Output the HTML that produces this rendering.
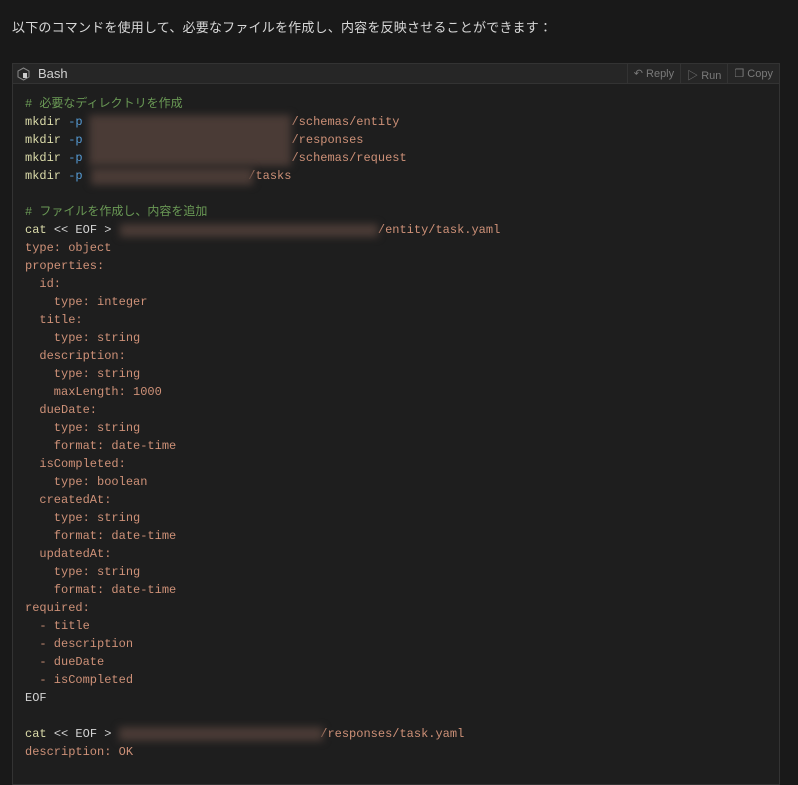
<!DOCTYPE html>
<html><head><meta charset="utf-8"><style>
body{margin:0;background:#191919;width:798px;height:756px;overflow:hidden;position:relative;font-family:"Liberation Sans","Noto Sans CJK JP",sans-serif}
.p{position:absolute;left:12px;top:17px;color:#d8d8d8;font-size:13px;letter-spacing:0.2px}
.box{position:absolute;left:12px;top:63px;width:766px;height:720px;border:1px solid #333;background:#1e1e1e}
.hd{height:19px;background:#262626;border-bottom:1px solid #333;position:relative}
.hd .t{position:absolute;left:25px;top:2px;color:#d0d0d0;font-size:13px}
.btns{position:absolute;right:0;top:0;height:19px;font-size:11px;color:#7a7a7a;display:flex}
.btns span{border-left:1px solid #333;padding:3px 6px 0 6px;height:16px}
pre{position:absolute;left:12px;top:31px;margin:0;font-family:"Liberation Mono","Noto Sans CJK JP",monospace;font-size:12px;line-height:18px;color:#ce9178}
.c{color:#6a9955}.y{color:#dcdcaa}.b{color:#569cd6}.w{color:#d4d4d4}
.bl{position:absolute;background:#4a3b36;filter:blur(4px)}
</style></head><body>
<div class="p">以下のコマンドを使用して、必要なファイルを作成し、内容を反映させることができます：</div>
<div class="box">
<div class="hd"><svg style="position:absolute;left:4px;top:3px" width="13" height="14" viewBox="0 0 13 14"><path d="M6.5 1L12 4v6l-5.5 3L1 10V4z" fill="none" stroke="#888" stroke-width="1"/><path d="M6 6h4v5H6z" fill="#ccc"/></svg><span class="t">Bash</span>
<div class="btns"><span>↶ Reply</span><span>▷ Run</span><span>❐ Copy</span></div></div>
<pre><span class="c"># 必要なディレクトリを作成</span>
<span class="y">mkdir</span> <span class="b">-p</span>                             /schemas/entity
<span class="y">mkdir</span> <span class="b">-p</span>                             /responses
<span class="y">mkdir</span> <span class="b">-p</span>                             /schemas/request
<span class="y">mkdir</span> <span class="b">-p</span>                       /tasks

<span class="c"># ファイルを作成し、内容を追加</span>
<span class="y">cat</span> <span class="w">&lt;&lt; EOF &gt;</span>                                     /entity/task.yaml
type: object
properties:
  id:
    type: integer
  title:
    type: string
  description:
    type: string
    maxLength: 1000
  dueDate:
    type: string
    format: date-time
  isCompleted:
    type: boolean
  createdAt:
    type: string
    format: date-time
  updatedAt:
    type: string
    format: date-time
required:
  - title
  - description
  - dueDate
  - isCompleted
<span class="w">EOF</span>

<span class="y">cat</span> <span class="w">&lt;&lt; EOF &gt;</span>                             /responses/task.yaml
description: OK</pre>
</div>
<div class="bl" style="left:89px;top:115px;width:202px;height:51px"></div>
<div class="bl" style="left:91px;top:168px;width:162px;height:17px"></div>
<div class="bl" style="left:120px;top:224px;width:258px;height:13px"></div>
<div class="bl" style="left:119px;top:727px;width:204px;height:14px"></div>
</body></html>
